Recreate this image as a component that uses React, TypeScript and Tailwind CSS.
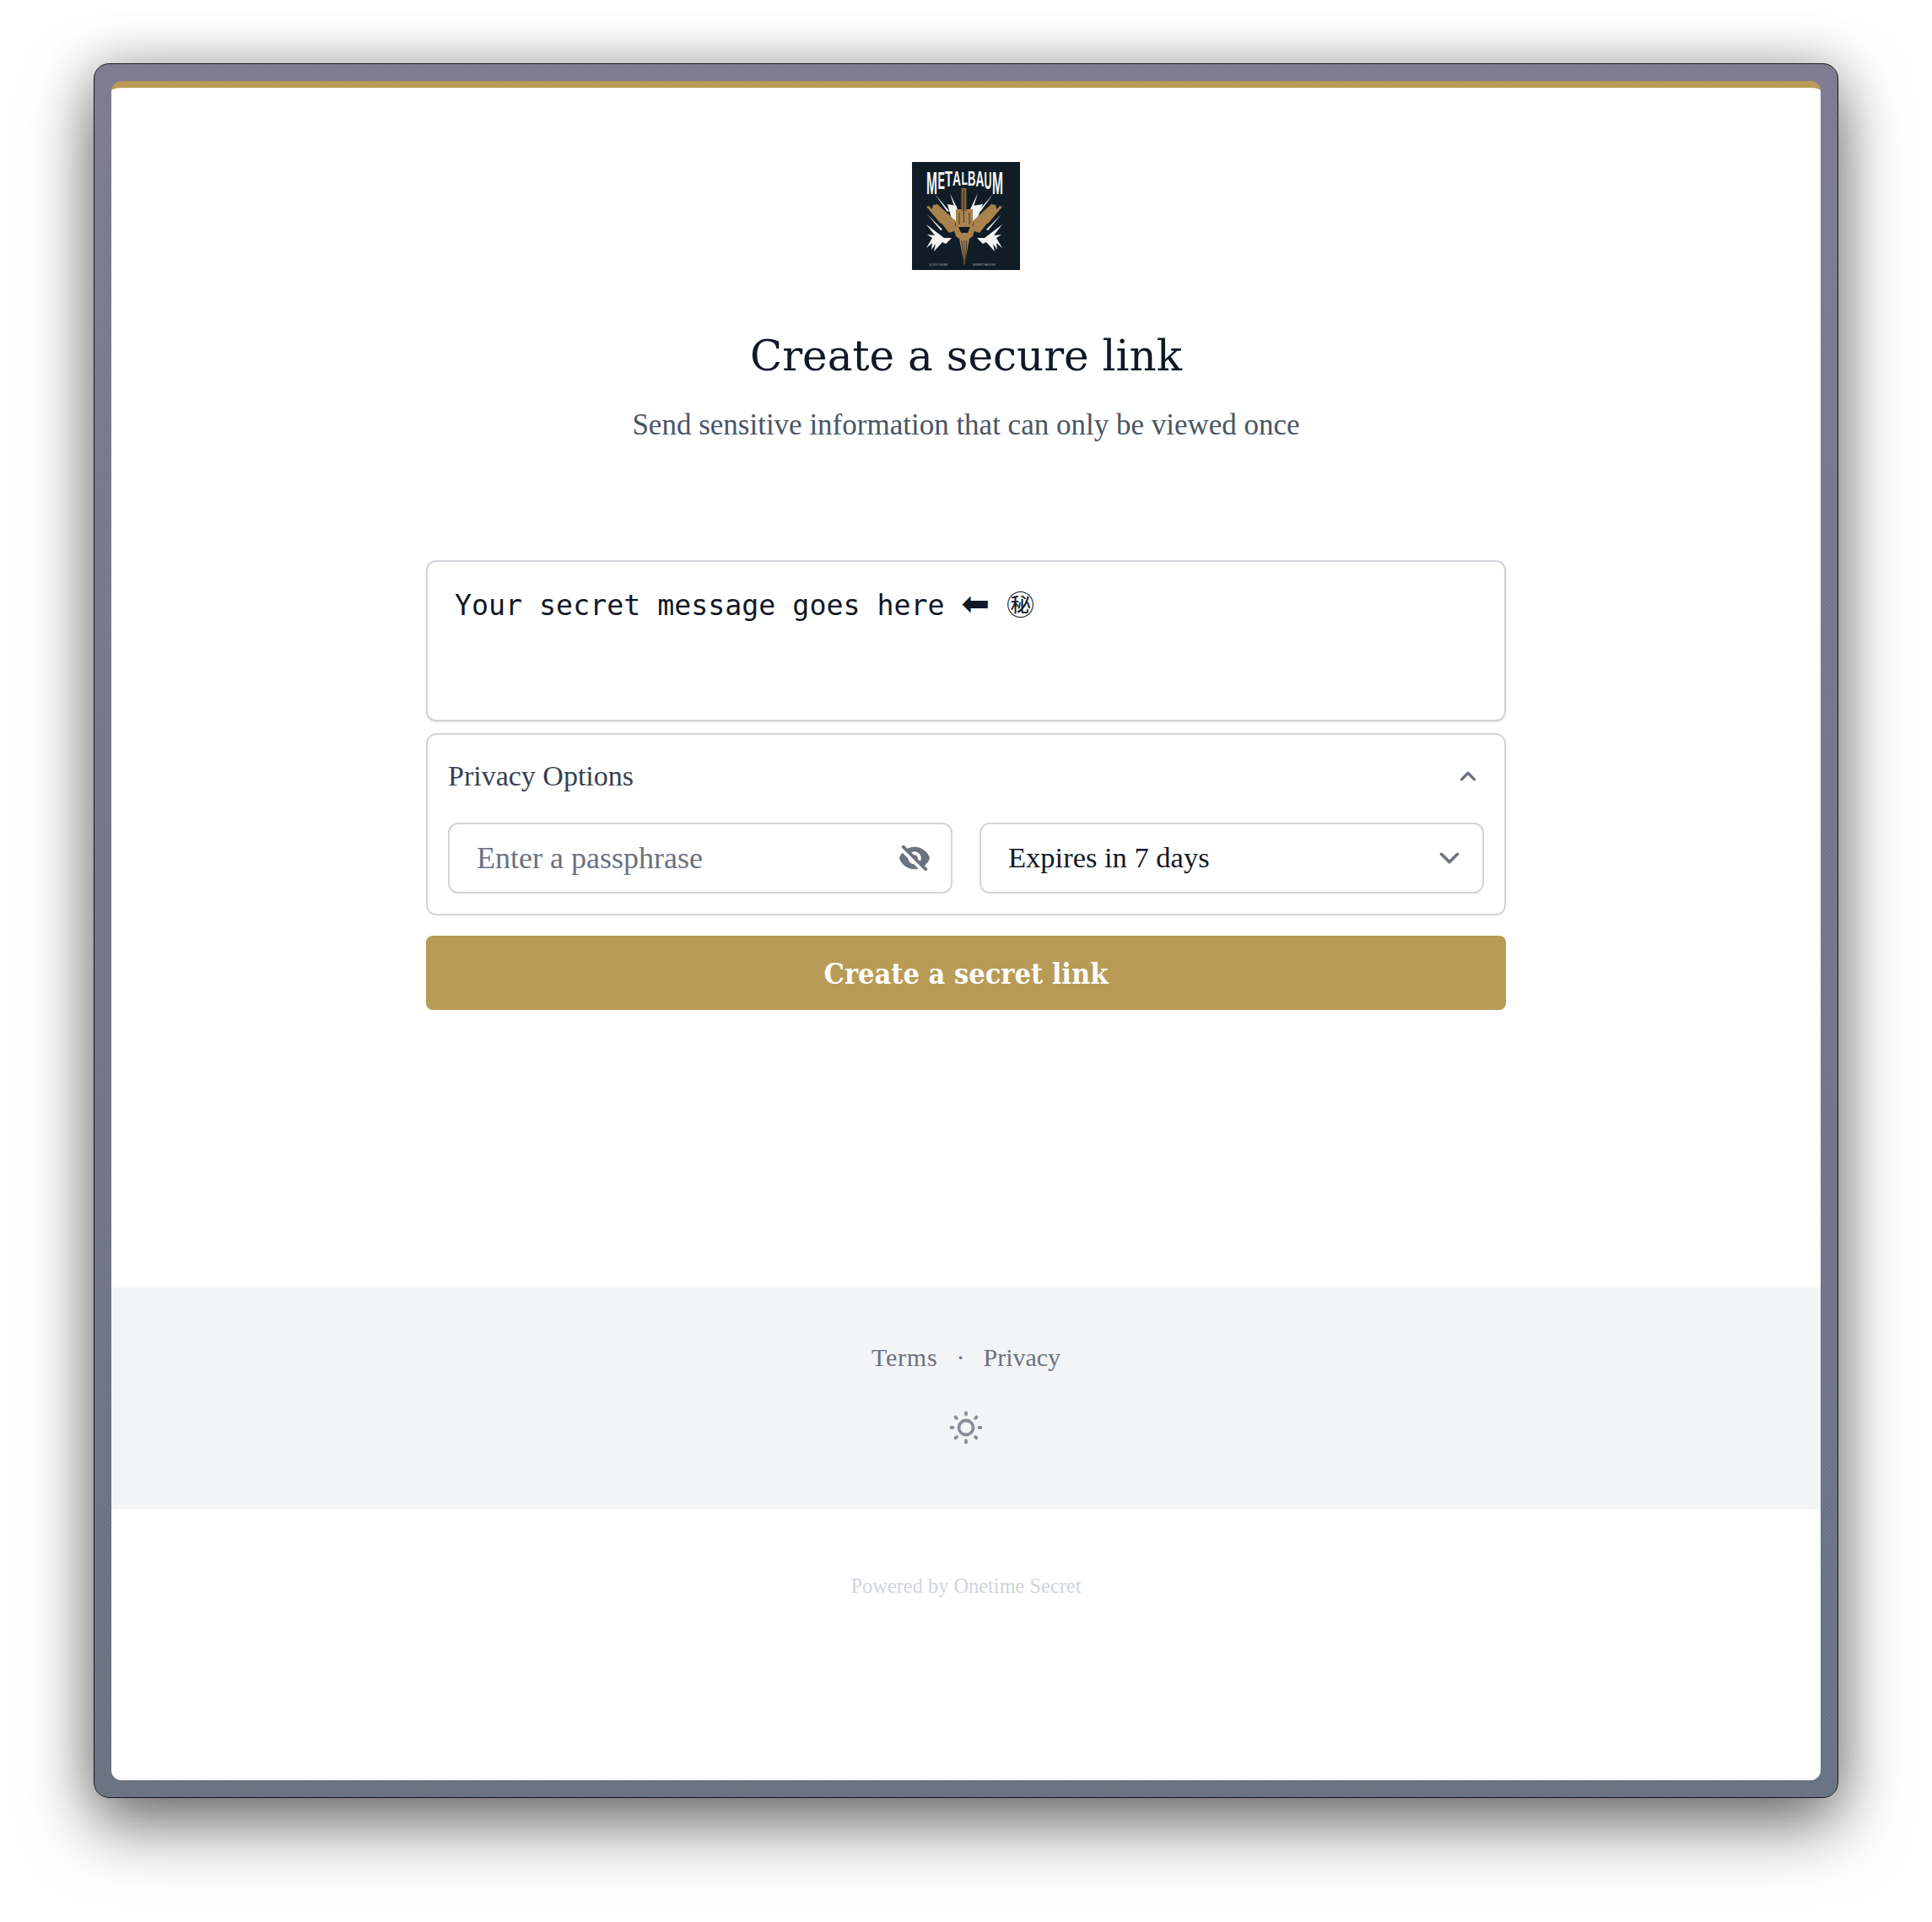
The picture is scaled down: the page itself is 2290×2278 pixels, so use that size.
import { ChevronDown, ChevronUp } from 'lucide-react';
import { HiEyeOff } from 'react-icons/hi';

const SERIF = 'font-["Liberation_Serif",serif]';
const SLAB = 'font-["DejaVu_Serif",serif]';
const SLAB_NARROW = 'font-["DejaVu_Serif_Condensed","DejaVu_Serif",serif]';

// x, width, height of each letter of the band name, top edge is fixed
const LOGO_LETTERS = [
  { c: 'M', x: 17, w: 13, h: 27, base: 8.33 },
  { c: 'E', x: 30.5, w: 8.5, h: 21, base: 6.67 },
  { c: 'T', x: 39, w: 9, h: 18, base: 6.11 },
  { c: 'A', x: 48, w: 10, h: 17, base: 7.22 },
  { c: 'L', x: 58.5, w: 7.5, h: 16, base: 6.11 },
  { c: 'B', x: 66, w: 9.5, h: 17, base: 7.22 },
  { c: 'A', x: 75.5, w: 10, h: 18, base: 7.22 },
  { c: 'U', x: 85.5, w: 9, h: 21, base: 7.22 },
  { c: 'M', x: 95, w: 13, h: 27, base: 8.33 },
];

const Logo = () => (
  <svg viewBox="0 0 128 128" className="w-32 h-32 block">
    <rect width="128" height="128" fill="#111d26" />
    {LOGO_LETTERS.map((l, i) => (
      <text
        key={i}
        fontSize="10"
        fontFamily="Liberation Sans, sans-serif"
        fontWeight="700"
        fill="#f4f4f4"
        transform={`translate(${l.x} ${11 + l.h}) scale(${l.w / l.base} ${l.h / 7.16})`}
      >
        {l.c}
      </text>
    ))}
    <g fill="#f4f4f4">
      <polygon points="27,38 44,58 42,59" />
      <polygon points="45,37 54,56 51,56" />
      <polygon points="78,37 69,56 72,56" />
      <polygon points="96,38 79,58 81,59" />
      <polygon points="42,50 53,52 53,71 47,68" />
      <polygon points="84,50 71,52 71,71 77,68" />
      <polygon points="17,74 38,90 47,90 40,97 36,95 26,106 28,97 23,104 24,96 17,102 24,90 18,86 27,87" />
      <polygon points="107,74 86,90 77,90 84,97 88,95 98,106 96,97 101,104 100,96 107,102 100,90 106,86 97,87" />
      <polygon points="18,62 36,80 34,81" />
      <polygon points="106,62 88,80 90,81" />
    </g>
    <g fill="#a9824d">
      <polygon points="17,53 20,52 37,71 34,73" />
      <polygon points="25,51 30,50 52,70 50,82 44,84 23,58" />
      <polygon points="107,53 104,52 87,71 90,73" />
      <polygon points="99,51 94,50 72,70 74,82 80,84 101,58" />
      <polygon points="52,56 72,56 72,75 75,78 72,88 68,91 62,123 56,91 52,88 49,78 52,75" />
    </g>
    <rect x="58.5" y="31" width="6" height="27" fill="#7c6139" />
    <g stroke="#111d26" strokeWidth="0.7">
      <line x1="61.5" y1="33" x2="61.5" y2="72" />
      <line x1="56" y1="60" x2="56" y2="74" />
      <line x1="68" y1="60" x2="68" y2="74" />
      <line x1="59" y1="93" x2="61" y2="118" />
      <line x1="62" y1="93" x2="62" y2="120" />
      <line x1="65" y1="93" x2="63" y2="118" />
    </g>
    <polygon points="55,77 69,77 66,84 58,84" fill="#111d26" />
    <text x="20" y="122.5" fontSize="2.6" fill="#9aa0a6" fontFamily="Liberation Sans, sans-serif">
      IN UNION WE ARE
    </text>
    <text x="72" y="122.5" fontSize="2.6" fill="#9aa0a6" fontFamily="Liberation Sans, sans-serif">
      MEMBER THAN EVER
    </text>
  </svg>
);

const SunIcon = () => (
  <svg viewBox="0 0 40 40" className="w-10 h-10" fill="none" stroke="#8a8e99" strokeLinecap="round">
    <circle cx="20" cy="20" r="8.5" strokeWidth="3.8" />
    <path strokeWidth="3.8" d="M20 2.5v2M20 35.5v2M2.5 20h2M35.5 20h2M7.6 7.6l1.4 1.4M31 31l1.4 1.4M7.6 32.4L9 31M31 9l1.4-1.4" />
  </svg>
);

export default function App() {
  return (
    <div className="min-h-[2278px] bg-white pt-[75px] pl-[111px] overflow-hidden">
      <div className="w-[2068px] h-[2056px] rounded-[18px] border border-[#16161a] bg-[repeating-linear-gradient(45deg,rgba(255,255,255,0.03)_0,rgba(255,255,255,0.03)_2px,transparent_2px,transparent_4px),linear-gradient(to_bottom,#7d7a90,#687280)] p-[20px] shadow-[0_34px_80px_rgba(0,0,0,0.5),0_0_60px_rgba(0,0,0,0.24)]">
        <div className="h-full rounded-[12px] bg-white border-t-[8px] border-[#b89b57] flex flex-col items-center overflow-hidden">
          <div className="mt-[88px]">
            <Logo />
          </div>
          <h1 className={`${SLAB} mt-[72px] text-[50px] leading-[60px] text-[#111827]`}>Create a secure link</h1>
          <p className={`${SERIF} mt-[28px] text-[35px] leading-[48px] text-[#4b5563]`}>
            Send sensitive information that can only be viewed once
          </p>

          <div className="mt-[136px] w-[1280px] flex flex-col">
            <div className='h-[191px] w-full rounded-[12px] border-2 border-[#d1d5db] bg-white px-[32px] pt-[29px] font-["DejaVu_Sans_Mono",monospace] text-[33.25px] leading-[44px] whitespace-pre text-[#111827] shadow-sm'>
              Your secret message goes here{' '}
              <span className='font-["DejaVu_Sans",sans-serif] text-[40px] leading-[40px]'>{'\u2B05\uFE0E'}</span>{' '}
              <span className='font-["DejaVu_Sans","Noto_Sans_CJK_JP",sans-serif] text-[33px] leading-[40px]'>{'\u3299\uFE0E'}</span>
            </div>
            <div className="mt-[14px] h-[216px] rounded-[12px] border-2 border-[#d1d5db] px-[24px]">
              <div className="mb-[7px] flex h-[97px] items-center justify-between pr-[4px]">
                <span className={`${SERIF} text-[34px] text-[#374151]`}>Privacy Options</span>
                <ChevronUp className="h-[30px] w-[30px] text-[#6b7280]" strokeWidth={2.6} />
              </div>
              <div className="grid grid-cols-2 gap-[32px]">
                <div className="flex h-[84px] min-w-0 items-center justify-between rounded-[12px] border-2 border-[#d1d5db] pl-[32px] pr-[24px]">
                  <input
                    readOnly
                    placeholder="Enter a passphrase"
                    className={`${SERIF} w-full min-w-0 bg-transparent text-[36px] outline-none placeholder:text-[#6b7280]`}
                  />
                  <HiEyeOff className="h-[38px] w-[38px] shrink-0 text-[#6b7280]" />
                </div>
                <div className="flex h-[84px] min-w-0 items-center justify-between rounded-[12px] border-2 border-[#d1d5db] pl-[32px] pr-[20px]">
                  <span className={`${SERIF} text-[34.5px] text-[#111827]`}>Expires in 7 days</span>
                  <ChevronDown className="h-[38px] w-[38px] text-[#6b7280]" strokeWidth={2.2} />
                </div>
              </div>
            </div>
            <button className={`${SLAB_NARROW} mt-[24px] h-[88px] rounded-[8px] bg-[#b89b57] pt-[2px] text-[34px] font-bold text-white`}>
              Create a secret link
            </button>
          </div>

          <footer className="mt-auto w-full">
            <div className="flex h-[263px] flex-col items-center bg-[#f3f4f6] pt-[63px]">
              <div className={`${SERIF} flex items-center gap-[22px] text-[30px] leading-[40px] text-[#6b7280]`}>
                <span className="tracking-[0.8px]">Terms</span>
                <span>·</span>
                <span>Privacy</span>
              </div>
              <div className="mt-[43px]">
                <SunIcon />
              </div>
            </div>
            <div className={`${SERIF} flex h-[321px] justify-center pt-[75px] text-[24.4px] leading-[32px] text-[#d1d5db]`}>
              Powered by Onetime Secret
            </div>
          </footer>
        </div>
      </div>
    </div>
  );
}
